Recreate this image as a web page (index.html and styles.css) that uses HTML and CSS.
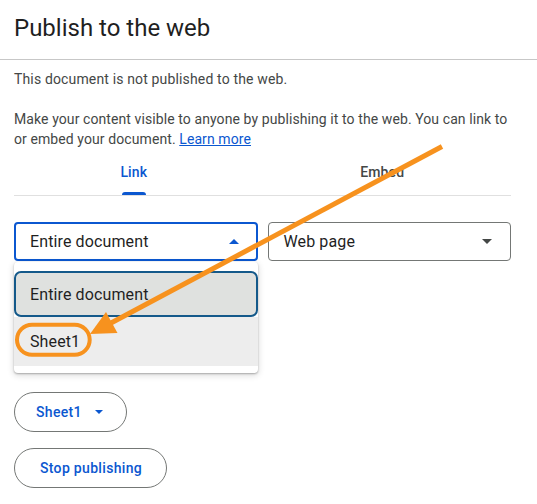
FILE: index.html
```html
<!DOCTYPE html>
<html lang="en">
<head>
<meta charset="utf-8">
<title>Publish to the web</title>
<link rel="stylesheet" href="styles.css">
</head>
<body>
<div class="dialog">
  <header class="head">
    <h1 class="title">Publish to the web</h1>
  </header>
  <div class="content">
    <p class="status">This document is not published to the web.</p>
    <p class="desc">Make your content visible to anyone by publishing it to the web. You can link to or embed your document. <a class="link" href="#">Learn more</a></p>
    <div class="tabs">
      <div class="tab active"><span class="tab-label">Link</span></div>
      <div class="tab"><span class="tab-label">Embed</span></div>
    </div>
    <div class="selects">
      <div class="select-wrap">
        <div class="select open">
          <span>Entire document</span>
          <svg class="caret" width="10" height="5" viewBox="0 0 10 5"><path d="M0 5 L5 0 L10 5 Z" fill="#0b57d0"/></svg>
        </div>
        <div class="menu">
          <div class="item focused">Entire document</div>
          <div class="item hover">Sheet1</div>
        </div>
      </div>
      <div class="select-wrap">
        <div class="select">
          <span>Web page</span>
          <svg class="caret" width="10" height="5" viewBox="0 0 10 5"><path d="M0 0 L10 0 L5 5 Z" fill="#444746"/></svg>
        </div>
      </div>
    </div>
    <div class="actions">
      <button class="btn btn-menu">Sheet1
        <svg class="btn-caret" width="8" height="4" viewBox="0 0 8 4"><path d="M0 0 L8 0 L4 4 Z" fill="#0b57d0"/></svg>
      </button>
      <button class="btn">Stop publishing</button>
    </div>
  </div>
  <svg class="annot" width="537" height="504" viewBox="0 0 537 504">
    <rect x="17" y="324.7" width="72.7" height="30" rx="15" ry="15" fill="none" stroke="#f7921e" stroke-width="4"/>
    <line x1="442" y1="146.5" x2="111" y2="323" stroke="#f7921e" stroke-width="5"/>
    <polygon points="90,334 117.5,333 106,312" fill="#f7921e"/>
  </svg>
</div>
</body>
</html>
```
FILE: styles.css
```css
* { box-sizing: border-box; }
html, body { margin: 0; padding: 0; background: #fff; }
body {
  font-family: Roboto, "Liberation Sans", Arial, sans-serif;
  color: #1f1f1f;
  width: 537px;
  height: 504px;
  overflow: hidden;
}
.dialog { position: relative; width: 537px; height: 504px; }
.head {
  padding: 12px 14px 15px;
  border-bottom: 1px solid #c7c7c7;
}
.title {
  margin: 0;
  font-size: 24px;
  line-height: 32px;
  font-weight: 400;
  color: #1f1f1f;
}
.content {
  padding: 9px 26px 0 14px;
}
.status, .desc {
  margin: 0;
  font-size: 14px;
  line-height: 20px;
  letter-spacing: 0.15px;
  color: #444746;
}
.desc { margin-top: 20px; letter-spacing: 0.09px; }
.link { color: #0b57d0; text-decoration: underline; }
.tabs {
  display: flex;
  border-bottom: 1px solid #e0e0e0;
}
.tab {
  flex: 1;
  display: flex;
  justify-content: center;
  padding: 13px 9px 13px 0;
  font-size: 14px;
  line-height: 20px;
  font-weight: 500;
  letter-spacing: 0.1px;
  color: #444746;
}
.tab-label { position: relative; }
.tab.active { color: #0b57d0; }
.tab.active .tab-label::after {
  content: "";
  position: absolute;
  left: 2px;
  right: 1px;
  bottom: -13px;
  height: 3px;
  background: #0b57d0;
  border-radius: 3px 3px 0 0;
}
.selects {
  display: flex;
  gap: 10px;
  margin-top: 26px;
}
.select-wrap { flex: 1; position: relative; }
.select {
  height: 39px;
  border: 1px solid #747775;
  border-radius: 4px;
  display: flex;
  align-items: center;
  justify-content: space-between;
  padding: 0 18px 0 15px;
  font-size: 16px;
  letter-spacing: 0.12px;
  color: #1f1f1f;
}
.select.open {
  border: 2px solid #0b57d0;
  padding: 0 17px 0 14px;
}
.menu {
  position: absolute;
  top: 40px;
  left: 0;
  right: 0;
  background: #fff;
  border-radius: 4px;
  padding: 9px 0 7px;
  box-shadow: 0 1px 2px rgba(0,0,0,.28), 0 2px 6px 1px rgba(0,0,0,.12);
  z-index: 2;
}
.item {
  font-size: 16px;
  letter-spacing: 0.12px;
  color: #1f1f1f;
  display: flex;
  align-items: center;
  padding-left: 16px;
}
.item.focused {
  height: 46px;
  background: #dfe1df;
  border: 2.5px solid #14598a;
  border-radius: 7px;
  padding-left: 14px;
}
.item.hover {
  height: 49px;
  background: #ededed;
}
.actions {
  margin-top: 131px;
  display: flex;
  flex-direction: column;
  align-items: flex-start;
  gap: 16px;
}
.btn {
  height: 40px;
  border: 1px solid #747775;
  border-radius: 20px;
  background: #fff;
  padding: 0 24px 0 25px;
  font-family: Roboto, "Liberation Sans", Arial, sans-serif;
  font-size: 14px;
  font-weight: 500;
  letter-spacing: 0.32px;
  color: #0b57d0;
  display: flex;
  align-items: center;
}
.btn-menu { padding: 0 23px 0 21px; }
.btn-caret { margin-left: 13px; }
.annot {
  position: absolute;
  top: 0;
  left: 0;
  pointer-events: none;
  z-index: 5;
}
```
